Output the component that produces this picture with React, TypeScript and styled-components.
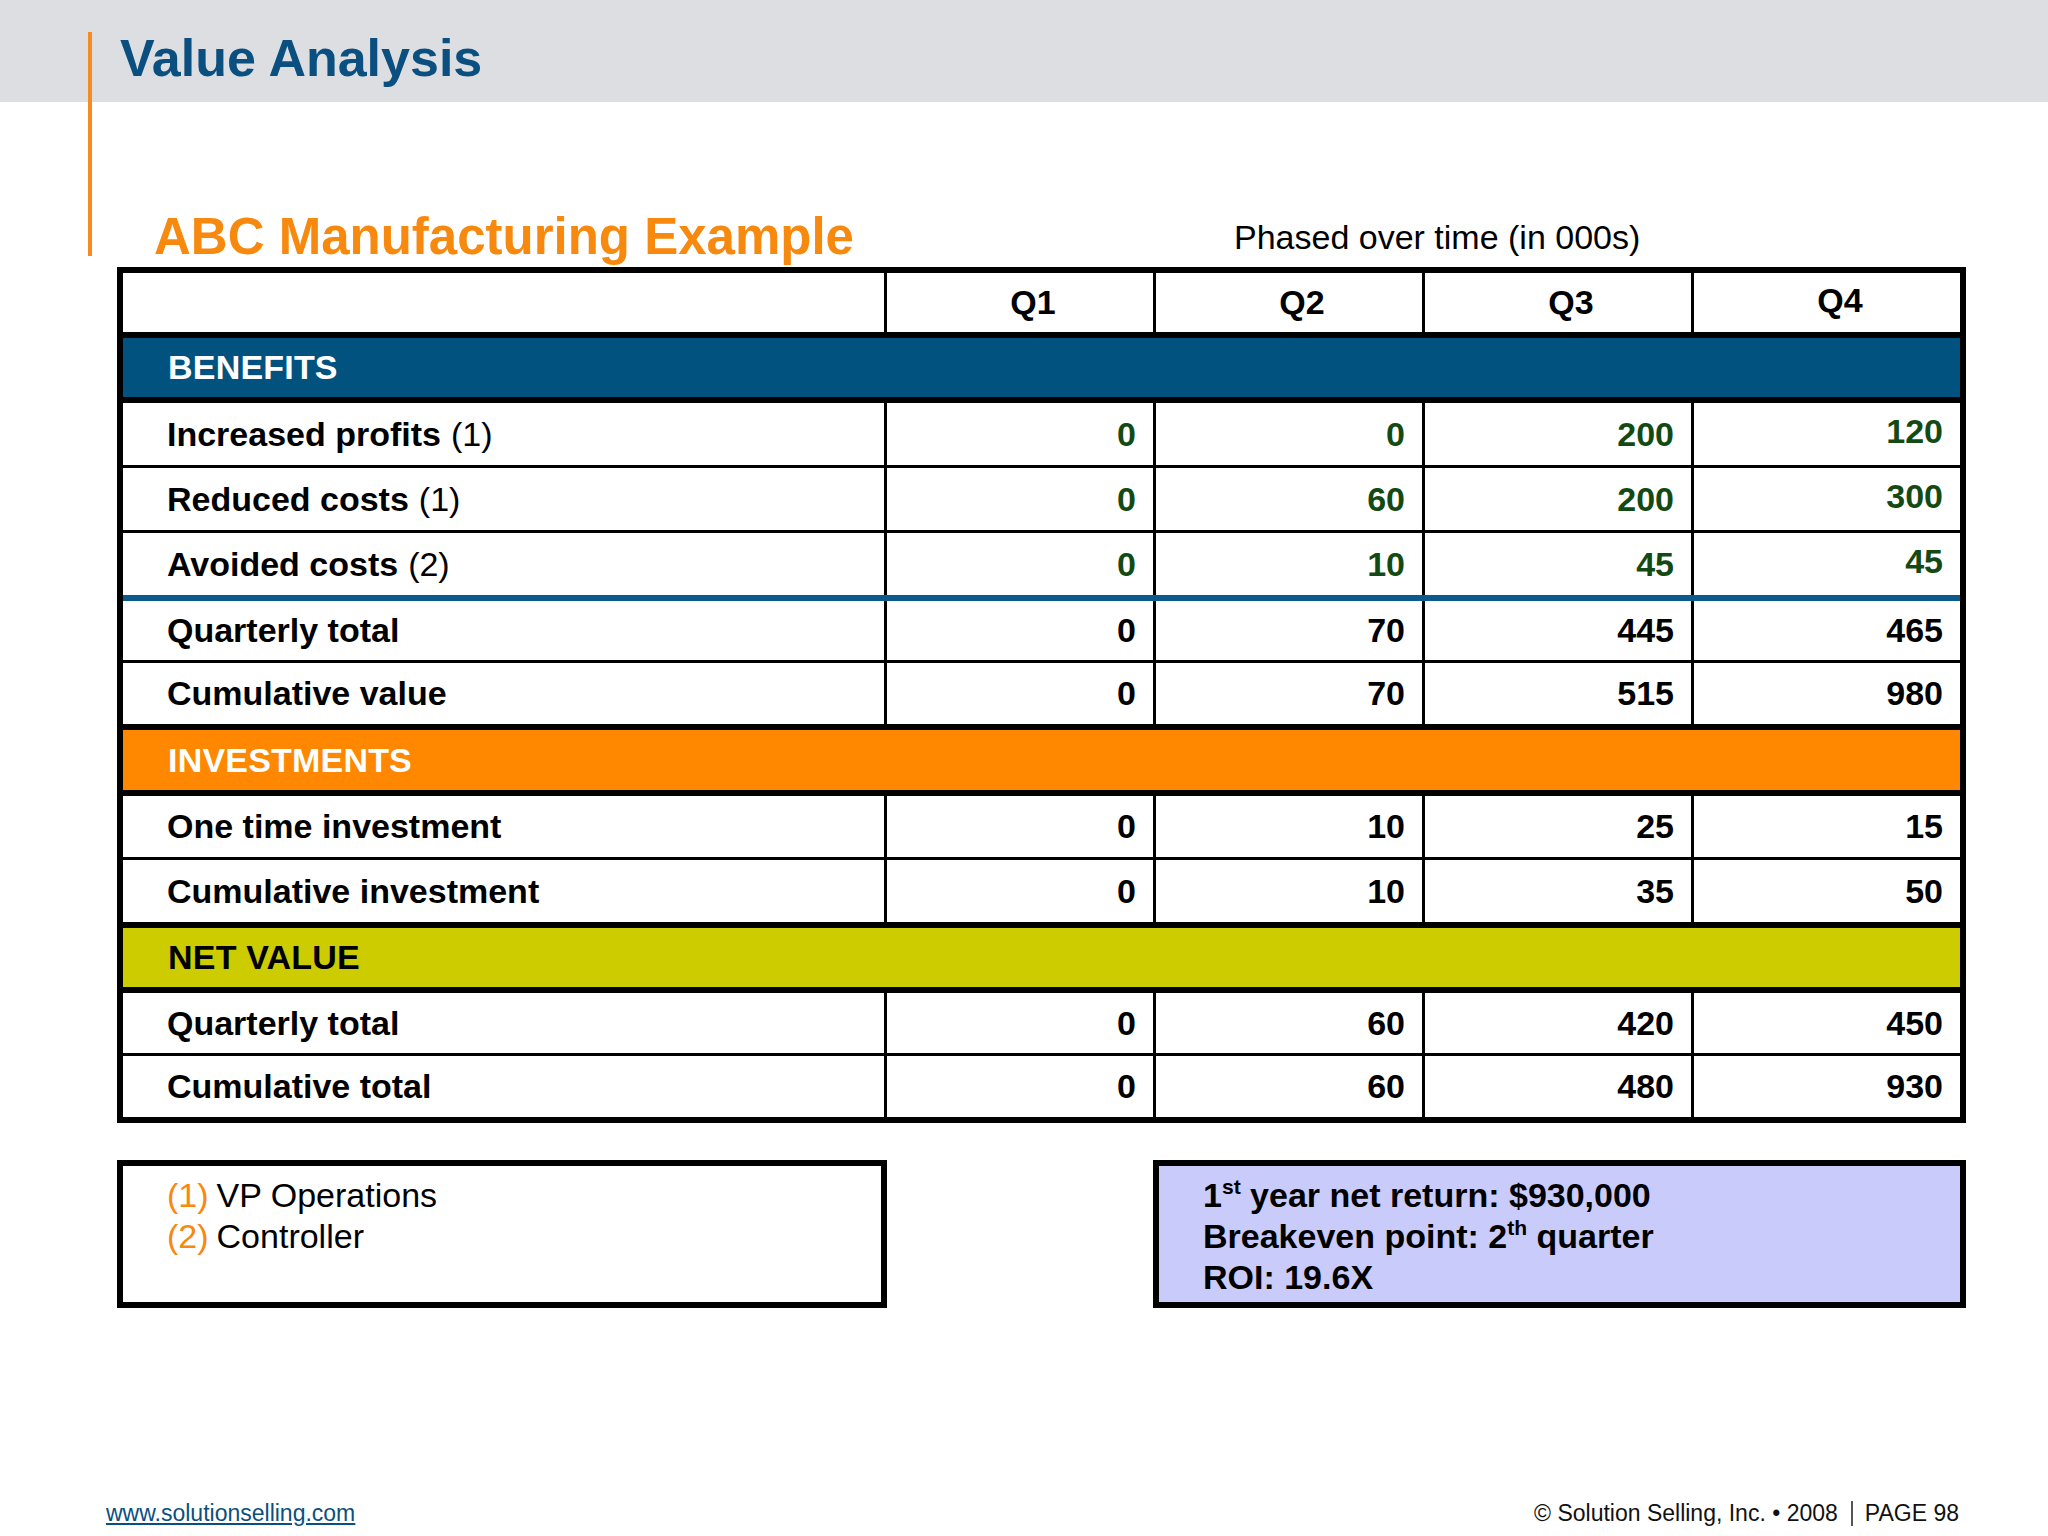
import React from 'react';
import styled, { createGlobalStyle } from 'styled-components';

const Global = createGlobalStyle`
  html, body { margin: 0; padding: 0; background: #ffffff; }
  body { font-family: "Liberation Sans", Arial, Helvetica, sans-serif; color: #000; }
  * { box-sizing: border-box; }
`;

const Page = styled.div`
  position: relative;
  width: 2048px;
  height: 1536px;
  display: flex;
  flex-direction: column;
  overflow: hidden;
  background: #fff;
`;

const Accent = styled.div`
  position: absolute;
  left: 88px;
  top: 32px;
  width: 4px;
  height: 224px;
  background: #f68b1f;
`;

const HeaderBand = styled.header`
  height: 102px;
  background: #dcdee1;
  padding: 32px 0 0 120px;
`;

const Title = styled.h1`
  margin: 0;
  font-size: 52px;
  line-height: 52px;
  font-weight: 700;
  color: #0b4f80;
`;

const Content = styled.main`
  padding-left: 117px;
  display: flex;
  flex-direction: column;
`;

const CaptionRow = styled.div`
  height: 160px;
  width: 1849px;
  display: grid;
  grid-template-columns: 768px 1fr;
  align-items: end;
`;

const Subtitle = styled.h2`
  margin: 0 0 0 37px;
  font-size: 51px;
  line-height: 51px;
  font-weight: 700;
  color: #f7890f;
  white-space: nowrap;
`;

const Caption = styled.div`
  margin: 0 0 8px 349px;
  font-size: 34px;
  line-height: 34px;
  white-space: nowrap;
`;

const Table = styled.div`
  margin-top: 5px;
  width: 1849px;
  border: 6px solid #000;
  display: flex;
  flex-direction: column;
`;

type Sep = 'none' | 'thin' | 'thick' | 'blue';

const sepStyle: Record<Sep, string> = {
  none: 'none',
  thin: '3px solid #000',
  thick: '6px solid #000',
  blue: '6px solid #0a5a8b',
};

const Row = styled.div<{ $sep: Sep; $h: number }>`
  display: grid;
  grid-template-columns: 761px repeat(4, 269px);
  height: ${(p) => p.$h + (p.$sep === 'none' ? 0 : p.$sep === 'thin' ? 3 : 6)}px;
  border-top: ${(p) => sepStyle[p.$sep]};
`;

const LabelCell = styled.div`
  display: flex;
  align-items: center;
  padding-left: 44px;
  font-size: 34px;
  font-weight: 700;
  white-space: nowrap;
`;

const LabelNote = styled.span`
  font-weight: 400;
  margin-left: 10px;
`;

const QCell = styled.div<{ $head?: boolean; $green?: boolean; $lift?: boolean }>`
  display: flex;
  align-items: center;
  justify-content: ${(p) => (p.$head ? 'center' : 'flex-end')};
  padding-right: ${(p) => (p.$head ? '0' : '17px')};
  padding-left: ${(p) => (p.$head ? '26px' : '0')};
  padding-bottom: ${(p) => (p.$lift ? '5px' : '0')};
  border-left: 3px solid #000;
  font-size: 34px;
  font-weight: 700;
  color: ${(p) => (p.$green ? '#134a14' : '#000')};
`;

const Band = styled.div<{ $bg: string; $fg: string; $sep: Sep; $h: number }>`
  display: flex;
  align-items: center;
  height: ${(p) => p.$h + 6}px;
  border-top: ${(p) => sepStyle[p.$sep]};
  background: ${(p) => p.$bg};
  color: ${(p) => p.$fg};
  padding-left: 45px;
  font-size: 34px;
  font-weight: 700;
  letter-spacing: 0.2px;
`;

const Notes = styled.div`
  margin-top: 37px;
  width: 1849px;
  display: flex;
  justify-content: space-between;
`;

const NoteBox = styled.div<{ $w: number; $bg: string; $bold?: boolean }>`
  width: ${(p) => p.$w}px;
  height: 148px;
  border: 6px solid #000;
  background: ${(p) => p.$bg};
  padding: 9px 0 0 44px;
  font-size: 34px;
  line-height: 41px;
  font-weight: ${(p) => (p.$bold ? 700 : 400)};
`;

const NoteLine = styled.div`
  white-space: nowrap;
`;

const Ref = styled.span`
  color: #f7890f;
  margin-right: 8px;
`;

const Sup = styled.sup`
  font-size: 0.62em;
  line-height: 0;
  vertical-align: 0.62em;
`;

const Footer = styled.footer`
  margin-top: auto;
  display: flex;
  justify-content: space-between;
  align-items: center;
  padding: 0 89px 9px 106px;
  font-size: 23px;
  line-height: 27px;
`;

const Link = styled.a`
  color: #0b4f80;
  text-decoration: underline;
`;

const Copyright = styled.div`
  display: flex;
  align-items: center;
  color: #111;
`;

const Divider = styled.span`
  display: inline-block;
  width: 2px;
  height: 25px;
  background: #555;
  margin: 0 12px 0 13px;
`;

type DataRow = {
  kind: 'data';
  label: string;
  note?: string;
  values: number[];
  green?: boolean;
  lift?: boolean;
  sep: Sep;
  h: number;
};
type BandRow = { kind: 'band'; label: string; bg: string; fg: string; h: number };

const rows: (DataRow | BandRow)[] = [
  { kind: 'band', label: 'BENEFITS', bg: '#02527f', fg: '#ffffff', h: 59 },
  { kind: 'data', label: 'Increased profits', note: '(1)', values: [0, 0, 200, 120], green: true, lift: true, sep: 'thick', h: 62 },
  { kind: 'data', label: 'Reduced costs', note: '(1)', values: [0, 60, 200, 300], green: true, lift: true, sep: 'thin', h: 62 },
  { kind: 'data', label: 'Avoided costs', note: '(2)', values: [0, 10, 45, 45], green: true, lift: true, sep: 'thin', h: 62 },
  { kind: 'data', label: 'Quarterly total', values: [0, 70, 445, 465], sep: 'blue', h: 59 },
  { kind: 'data', label: 'Cumulative value', values: [0, 70, 515, 980], sep: 'thin', h: 61 },
  { kind: 'band', label: 'INVESTMENTS', bg: '#ff8800', fg: '#ffffff', h: 60 },
  { kind: 'data', label: 'One time investment', values: [0, 10, 25, 15], sep: 'thick', h: 61 },
  { kind: 'data', label: 'Cumulative investment', values: [0, 10, 35, 50], sep: 'thin', h: 62 },
  { kind: 'band', label: 'NET VALUE', bg: '#cccc00', fg: '#000000', h: 59 },
  { kind: 'data', label: 'Quarterly total', values: [0, 60, 420, 450], sep: 'thick', h: 60 },
  { kind: 'data', label: 'Cumulative total', values: [0, 60, 480, 930], sep: 'thin', h: 61 },
];

export default function App() {
  return (
    <>
      <Global />
      <Page>
        <Accent />
        <HeaderBand>
          <Title>Value Analysis</Title>
        </HeaderBand>
        <Content>
          <CaptionRow>
            <Subtitle>ABC Manufacturing Example</Subtitle>
            <Caption>Phased over time (in 000s)</Caption>
          </CaptionRow>
          <Table>
            <Row $sep="none" $h={59}>
              <LabelCell />
              {['Q1', 'Q2', 'Q3', 'Q4'].map((q, i) => (
                <QCell key={q} $head $lift={i === 3}>
                  {q}
                </QCell>
              ))}
            </Row>
            {rows.map((r, idx) =>
              r.kind === 'band' ? (
                <Band key={idx} $bg={r.bg} $fg={r.fg} $sep="thick" $h={r.h}>
                  {r.label}
                </Band>
              ) : (
                <Row key={idx} $sep={r.sep} $h={r.h}>
                  <LabelCell>
                    {r.label}
                    {r.note && <LabelNote>{r.note}</LabelNote>}
                  </LabelCell>
                  {r.values.map((v, i) => (
                    <QCell key={i} $green={r.green} $lift={r.lift && i === 3}>
                      {v}
                    </QCell>
                  ))}
                </Row>
              )
            )}
          </Table>
          <Notes>
            <NoteBox $w={770} $bg="#ffffff">
              <NoteLine>
                <Ref>(1)</Ref>VP Operations
              </NoteLine>
              <NoteLine>
                <Ref>(2)</Ref>Controller
              </NoteLine>
            </NoteBox>
            <NoteBox $w={813} $bg="#c9cbfb" $bold>
              <NoteLine>
                1<Sup>st</Sup> year net return: $930,000
              </NoteLine>
              <NoteLine>
                Breakeven point: 2<Sup>th</Sup> quarter
              </NoteLine>
              <NoteLine>ROI: 19.6X</NoteLine>
            </NoteBox>
          </Notes>
        </Content>
        <Footer>
          <Link href="#">www.solutionselling.com</Link>
          <Copyright>
            © Solution Selling, Inc. • 2008
            <Divider />
            PAGE 98
          </Copyright>
        </Footer>
      </Page>
    </>
  );
}
